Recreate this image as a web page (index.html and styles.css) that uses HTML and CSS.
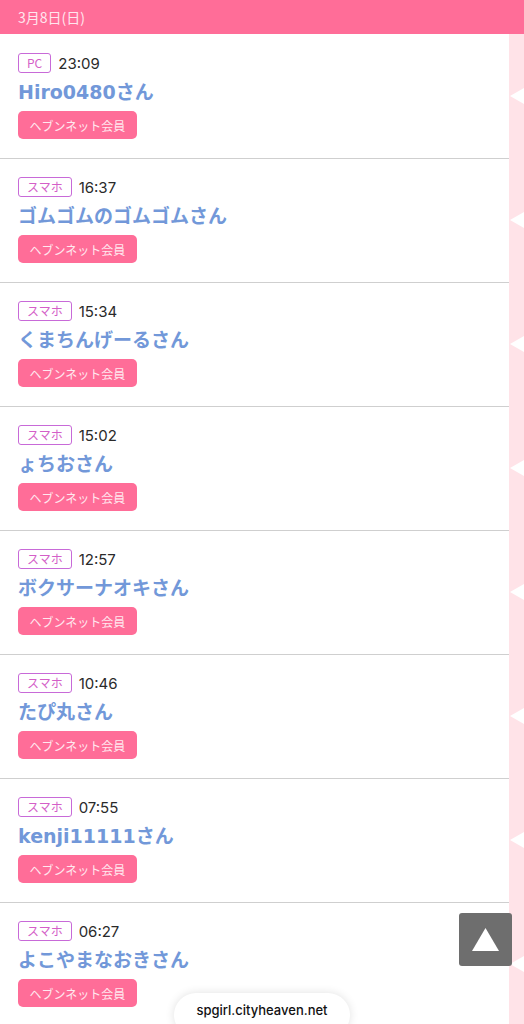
FILE: index.html
```html
<!DOCTYPE html>
<html lang="ja">
<head>
<meta charset="utf-8">
<link rel="stylesheet" href="styles.css">
</head>
<body>
<header class="date-bar">3月8日(日)</header>
<div class="list-wrap">
  <ul class="list">
    <li class="row"><div class="meta"><span class="device">PC</span><span class="time">23:09</span></div><div class="name">Hiro0480さん</div><span class="member">ヘブンネット会員</span></li>
    <li class="row"><div class="meta"><span class="device">スマホ</span><span class="time">16:37</span></div><div class="name">ゴムゴムのゴムゴムさん</div><span class="member">ヘブンネット会員</span></li>
    <li class="row"><div class="meta"><span class="device">スマホ</span><span class="time">15:34</span></div><div class="name">くまちんげーるさん</div><span class="member">ヘブンネット会員</span></li>
    <li class="row"><div class="meta"><span class="device">スマホ</span><span class="time">15:02</span></div><div class="name">ょちおさん</div><span class="member">ヘブンネット会員</span></li>
    <li class="row"><div class="meta"><span class="device">スマホ</span><span class="time">12:57</span></div><div class="name">ボクサーナオキさん</div><span class="member">ヘブンネット会員</span></li>
    <li class="row"><div class="meta"><span class="device">スマホ</span><span class="time">10:46</span></div><div class="name">たぴ丸さん</div><span class="member">ヘブンネット会員</span></li>
    <li class="row"><div class="meta"><span class="device">スマホ</span><span class="time">07:55</span></div><div class="name">kenji11111さん</div><span class="member">ヘブンネット会員</span></li>
    <li class="row"><div class="meta"><span class="device">スマホ</span><span class="time">06:27</span></div><div class="name">よこやまなおきさん</div><span class="member">ヘブンネット会員</span></li>
  </ul>
</div>
<a class="to-top" href="#"><svg width="27" height="23" viewBox="0 0 27 23"><polygon points="13.5,0 27,23 0,23" fill="#fff"/></svg></a>
<div class="url-pill">spgirl.cityheaven.net</div>
</body>
</html>
```

FILE: styles.css
```css
* { box-sizing: border-box; }
html, body { margin: 0; padding: 0; }
body {
  width: 524px;
  height: 1024px;
  overflow: hidden;
  background: #fff;
  font-family: "Noto Sans CJK JP", "Noto Sans", sans-serif;
  position: relative;
}
.date-bar {
  height: 34px;
  background: #ff6d98;
  color: #ffe6ee;
  font-size: 14px;
  line-height: 34px;
  padding-left: 18px;
}
.list-wrap {
  background: #ffe3e8;
  padding-right: 15px;
}
.list {
  list-style: none;
  margin: 0;
  padding: 1px 0 0;
  background: #fff;
}
.row {
  position: relative;
  height: 124px;
  padding: 18px 18px 0;
  border-bottom: 1px solid #cfcfcf;
}
.row::after {
  content: "";
  position: absolute;
  right: -15px;
  top: 53px;
  border-style: solid;
  border-width: 8px 14px 8px 0;
  border-color: transparent #fff transparent transparent;
}
.meta {
  display: flex;
  align-items: center;
  gap: 7px;
  height: 20px;
}
.device {
  display: inline-flex;
  align-items: center;
  justify-content: center;
  height: 20px;
  padding: 0 8px;
  border: 1px solid #c86ad8;
  border-radius: 3px;
  color: #d45fc8;
  font-size: 12px;
  line-height: 1;
}
.time {
  color: #2a2a2a;
  font-family: "Inter", "Noto Sans", sans-serif;
  font-size: 15px;
}
.name {
  margin-top: 5px;
  height: 33px;
  line-height: 28px;
  color: #7298d9;
  font-family: "DejaVu Sans", "Noto Sans CJK JP", sans-serif;
  font-weight: bold;
  font-size: 19px;
  white-space: nowrap;
}
.member {
  display: inline-flex;
  align-items: center;
  justify-content: center;
  width: 119px;
  height: 28px;
  background: #ff6d98;
  color: #ffe8ef;
  border-radius: 5px;
  font-size: 12px;
}
.to-top {
  position: absolute;
  left: 459px;
  top: 913px;
  width: 53px;
  height: 53px;
  background: #6e6e6e;
  border-radius: 3px;
  display: flex;
  align-items: center;
  justify-content: center;
}
.to-top svg { margin-top: -1px; }
.url-pill {
  position: absolute;
  left: 174px;
  top: 993px;
  width: 176px;
  height: 44px;
  border-radius: 22px;
  background: #fff;
  box-shadow: 0 0 10px rgba(0,0,0,0.12);
  text-align: center;
  padding-top: 9px;
  font-family: "Inter", "Liberation Sans", sans-serif;
  font-size: 13px;
  font-weight: 500;
  color: #111;
}
```
